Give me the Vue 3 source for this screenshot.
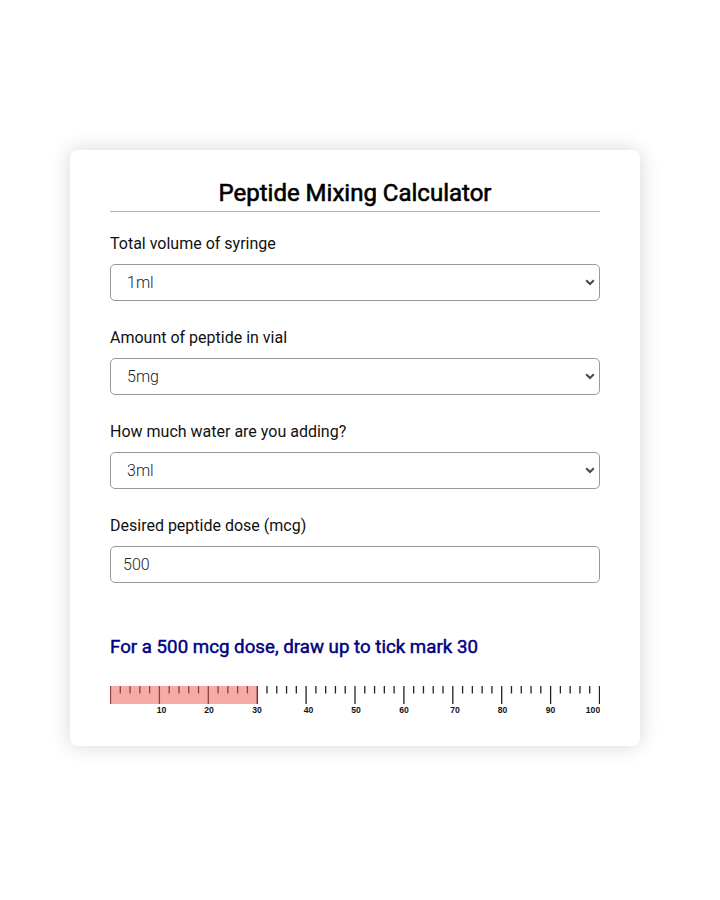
<script setup>
import { ref, computed } from 'vue'

const syringe = ref('1ml')
const vial = ref('5mg')
const water = ref('3ml')
const dose = ref('500')

const selects = [
  { id: 'syringe', label: 'Total volume of syringe', model: syringe, options: ['0.3ml', '0.5ml', '1ml'] },
  { id: 'vial', label: 'Amount of peptide in vial', model: vial, options: ['5mg', '10mg', '15mg'] },
  { id: 'water', label: 'How much water are you adding?', model: water, options: ['1ml', '2ml', '3ml', '5ml'] },
]

const mark = computed(() => {
  const mcgPerMl = (parseFloat(vial.value) * 1000) / parseFloat(water.value)
  const ml = Number(dose.value) / mcgPerMl
  return Math.round((ml / parseFloat(syringe.value)) * 100)
})

const ticks = Array.from({ length: 51 }, (_, i) => ({
  x: 0.5 + i * 9.78,
  major: i % 5 === 0,
}))
const numbers = [
  [10, 51.5], [20, 99], [30, 147], [40, 198.5], [50, 246],
  [60, 294], [70, 345], [80, 392.5], [90, 440.5], [100, 483],
]
</script>

<template>
  <main class="page">
    <section class="card">
      <h1 class="title">Peptide Mixing Calculator</h1>
      <div v-for="s in selects" :key="s.id" class="field">
        <label :for="s.id">{{ s.label }}</label>
        <div class="select">
          <select :id="s.id" v-model="s.model.value" class="control">
            <option v-for="o in s.options" :key="o">{{ o }}</option>
          </select>
          <svg class="chevron" viewBox="0 0 10 7" width="10" height="7">
            <path d="M1.2 1.3 L5 5 L8.8 1.3" />
          </svg>
        </div>
      </div>
      <div class="field">
        <label for="dose">Desired peptide dose (mcg)</label>
        <input id="dose" v-model="dose" class="control" type="text" />
      </div>
      <h2 class="result">For a {{ dose }} mcg dose, draw up to tick mark {{ mark }}</h2>
      <svg class="ruler" viewBox="0 0 490 32" width="490" height="32">
        <line
          v-for="t in ticks" :key="t.x"
          :x1="t.x" :x2="t.x" y1="0" :y2="t.major ? 18 : 7.5"
          class="tick"
        />
        <text v-for="[n, x] in numbers" :key="n" :x="x" y="26.6" class="number">{{ n }}</text>
        <rect x="0" y="0" :width="mark * 4.9" height="18" class="fill" />
      </svg>
    </section>
  </main>
</template>

<style>
body {
  background: #fff;
}
</style>

<style scoped>
.page {
  box-sizing: border-box;
  padding: 150px 80px 0 70px;
  height: 900px;
  font-family: Roboto, "Liberation Sans", sans-serif;
  color: #000;
}
.card {
  box-sizing: border-box;
  width: 570px;
  height: 596px;
  padding: 25px 40px 0;
  border-radius: 8px;
  background: #fff;
  box-shadow: 0 0 20px rgba(0, 0, 0, 0.17);
}
.title {
  margin: 0 0 20px;
  height: 36px;
  border-bottom: 1px solid #62cfdc;
  font-size: 24px;
  line-height: 36px;
  font-weight: 400;
  text-align: center;
  -webkit-text-stroke: 0.6px #000;
}
.field {
  display: flex;
  flex-direction: column;
  gap: 9px;
  margin-bottom: 25px;
}
.field label {
  font-size: 16px;
  line-height: 23px;
  color: #111;
}
.select {
  position: relative;
  display: flex;
}
.control {
  appearance: none;
  box-sizing: border-box;
  width: 100%;
  height: 37px;
  margin: 0;
  padding: 0 12px;
  border: 1px solid #999;
  border-radius: 5px;
  outline: none;
  background: #fff;
  color: #222;
  font-family: inherit;
  font-size: 16px;
  font-weight: 300;
}
.select .control {
  padding-left: 16px;
}
.chevron {
  position: absolute;
  top: 15px;
  right: 5px;
  pointer-events: none;
}
.chevron path {
  fill: none;
  stroke: #484848;
  stroke-width: 2;
}
.result {
  margin: 50px 0 25px;
  font-size: 18.72px;
  line-height: 28px;
  font-weight: 400;
  color: navy;
  -webkit-text-stroke: 0.45px navy;
}
.ruler {
  display: block;
}
.tick {
  stroke: #222;
  stroke-width: 1.3;
}
.number {
  fill: #111;
  font: bold 8.6px "Liberation Sans", sans-serif;
  text-anchor: middle;
}
.fill {
  fill: rgba(240, 94, 86, 0.52);
}
</style>
